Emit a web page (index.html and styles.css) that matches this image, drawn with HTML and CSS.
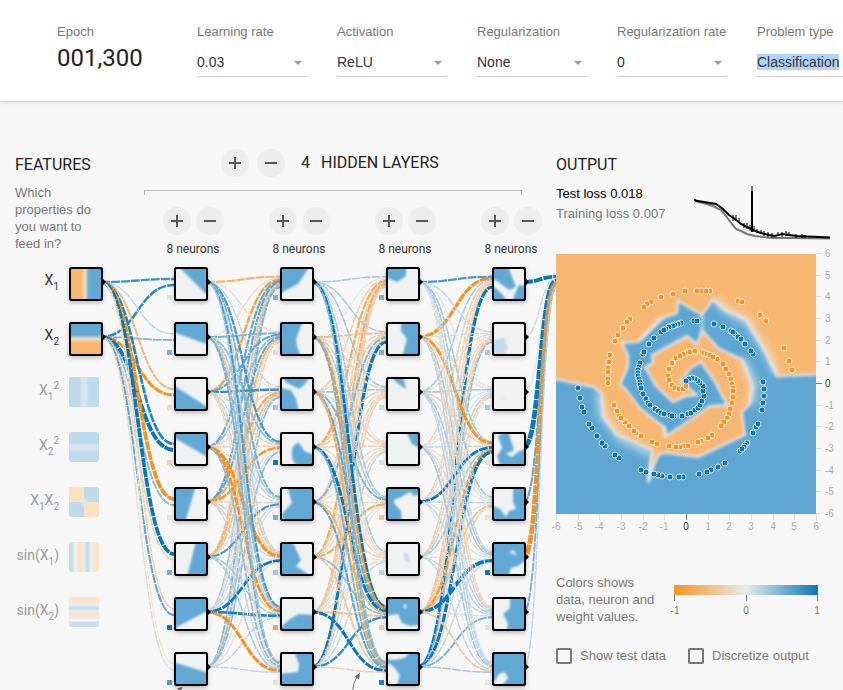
FILE: index.html
```html
<!DOCTYPE html>
<html lang="en">
<head>
<meta charset="utf-8">
<title>Neural network playground</title>
<link rel="stylesheet" href="styles.css">
</head>
<body>
<header class="controls">
  <div class="control">
    <span class="control-label">Epoch</span>
    <output class="epoch">001,300</output>
  </div>
  <div class="control">
    <label class="control-label" for="rate">Learning rate</label>
    <div class="picker"><select id="rate"><option>0.03</option></select></div>
  </div>
  <div class="control">
    <label class="control-label" for="activation">Activation</label>
    <div class="picker"><select id="activation"><option>ReLU</option></select></div>
  </div>
  <div class="control">
    <label class="control-label" for="regularization">Regularization</label>
    <div class="picker"><select id="regularization"><option>None</option></select></div>
  </div>
  <div class="control">
    <label class="control-label" for="regrate">Regularization rate</label>
    <div class="picker"><select id="regrate"><option>0</option></select></div>
  </div>
  <div class="control">
    <label class="control-label" for="problem">Problem type</label>
    <div class="picker"><select id="problem" class="selected"><option>Classification</option></select></div>
  </div>
</header>
<main class="workspace">
  <section class="network">
    <div class="network-head">
      <div class="features">
        <h2>FEATURES</h2>
        <p>Which properties do you want to feed in?</p>
      </div>
      <div class="layers">
        <div class="layer-count">
          <button class="round" aria-label="Add layer"><svg viewBox="0 0 28 28"><path d="M14 8v12M8 14h12"/></svg></button>
          <button class="round" aria-label="Remove layer"><svg viewBox="0 0 28 28"><path d="M8 14h12"/></svg></button>
          <h2><span class="count">4</span>HIDDEN LAYERS</h2>
        </div>
        <div class="bracket"></div>
        <div class="neuron-groups" id="groups"></div>
      </div>
    </div>
    <svg class="diagram" id="diagram" viewBox="0 260 556 430" role="img" aria-label="Network">
      <defs>
        <filter id="soft" x="-20%" y="-20%" width="140%" height="140%"><feGaussianBlur stdDeviation="1.300"/></filter>
        <filter id="shade" x="-30%" y="-30%" width="160%" height="160%"><feDropShadow dx="0" dy="2" stdDeviation="2" flood-opacity="0.25"/></filter>
        <clipPath id="thumb"><rect width="30" height="30"/></clipPath>
        <clipPath id="thumbRound"><rect width="30" height="30" rx="3"/></clipPath>
        <linearGradient id="gx1"><stop offset=".35" stop-color="#f8b870"/><stop offset=".47" stop-color="#f1ddc5"/><stop offset=".6" stop-color="#62a8d5"/></linearGradient>
        <linearGradient id="gx2" x2="0" y2="1"><stop offset=".35" stop-color="#62a8d5"/><stop offset=".5" stop-color="#f1ddc5"/><stop offset=".62" stop-color="#f8b870"/></linearGradient>
        <linearGradient id="gsq"><stop offset=".35" stop-color="#bfdaec"/><stop offset=".45" stop-color="#d7e6ee"/><stop offset=".55" stop-color="#d7e6ee"/><stop offset=".67" stop-color="#bfdaec"/></linearGradient>
        <linearGradient id="gsqy" x2="0" y2="1"><stop offset=".35" stop-color="#bfdaec"/><stop offset=".45" stop-color="#d7e6ee"/><stop offset=".55" stop-color="#d7e6ee"/><stop offset=".67" stop-color="#bfdaec"/></linearGradient>
        <linearGradient id="gsin"><stop offset=".1" stop-color="#c4dcec"/><stop offset=".22" stop-color="#f3efea"/><stop offset=".32" stop-color="#fae1c6"/><stop offset=".42" stop-color="#f8e3cd"/><stop offset=".5" stop-color="#e8eef0"/><stop offset=".62" stop-color="#bfdaec"/><stop offset=".75" stop-color="#edf0f2"/><stop offset=".83" stop-color="#fae3cb"/></linearGradient>
        <linearGradient id="gsiny" x2="0" y2="1"><stop offset=".15" stop-color="#fae3cb"/><stop offset=".25" stop-color="#edf0f2"/><stop offset=".37" stop-color="#bfdaec"/><stop offset=".48" stop-color="#e8eef0"/><stop offset=".6" stop-color="#fae1c6"/><stop offset=".7" stop-color="#f8e9dc"/><stop offset=".78" stop-color="#f3f5f6"/><stop offset=".85" stop-color="#c8deed"/></linearGradient>
      </defs>
      <g id="links" class="links"></g>
      <g id="nodes"></g>
      <g class="callouts">
        <path d="M353 692Q352 684 359 674"/><path class="tip" d="M360 672.500l-1 7-4-3z"/>
        <path d="M173 694L180 689"/><path class="tip" d="M183 687l-6 1 3 4z"/>
      </g>
    </svg>
  </section>
  <section class="output">
    <div class="output-head">
      <div>
        <h2>OUTPUT</h2>
        <div class="loss test">Test loss 0.018</div>
        <div class="loss">Training loss 0.007</div>
      </div>
      <svg class="loss-chart" viewBox="0 0 138 56" aria-hidden="true">
        <path class="train" d="M2 15L10 17 20 20 28 24 33 30 38 37 43 43 48 45 54 48 62 50 70 51 80 52 100 52 137 52.500"/>
        <path class="test" d="M2 15V13M2 14.500L14 16.500 23 18 30 23 36 29 42 33 48 38 54 41 60 44 68 47 76 49 82 50 89 48 96 49 104 50 137 51.500"/>
        <path class="test" d="M59 1V46"/>
        <path class="train" d="M59 0V5"/>
        <path class="test noise" d="M40 29v6M43 29v6M46 32v4M51 37v5M54 37v6M57 39v6M61 40v6M64 43v4M68 44v4M71 45v5M75 46v5M79 47v5M85 46v4M89 46v5M93 45v5M96 46v4M103 48v4M109 48v4M112 49v3"/>
      </svg>
    </div>
    <svg class="heatmap" id="heatmap" viewBox="0 0 287 282" role="img" aria-label="Output">
      <defs>
        <clipPath id="plot"><rect width="260" height="260"/></clipPath>
        <filter id="edge" x="-5%" y="-5%" width="110%" height="110%"><feGaussianBlur stdDeviation="1.500"/></filter>
        <filter id="wide" x="-30%" y="-30%" width="160%" height="160%"><feGaussianBlur stdDeviation="3.500"/></filter>
      </defs>
      <g clip-path="url(#plot)">
        <rect class="blue" width="260" height="260"/>
        <path class="region" filter="url(#edge)" d="M-20 -20H280V120L221 122 207 94 189 65 170 57 157 46 146 61 122 47 121 59 107 64 82 88 66 89 72 101 72 113 64 131 69 134 84 154 109 174 110 182 134 166 154 152 171 151 159 128 145 108 135 114 125 126 130 132 141 141 130 142 117 148 100 132 89 113 97 109 96 101 131 82 141 90 146 76 162 94 187 106 197 133 194 150 186 158 189 181 142 203 111 199 103 200 97 213 92 229 96 196 61 181 47 163 45 139 37 133 -20 121Z"/>
        <path class="haze" filter="url(#wide)" d="M159 45L170 56 192 68 210 96 222 121M43 138L46 160 64 184 96 200M187 106L198 130 195 150"/>
        <path class="haze thin" filter="url(#edge)" d="M146 60V76M106 62L84 86M96 203L93 226M108 172v11"/>
      </g>
      <g id="dots"></g>
      <g id="axes"></g>
    </svg>
    <div class="legend">
      <p>Colors shows data, neuron and weight values.</p>
      <div class="scale">
        <div class="ramp"></div>
        <div class="ticks"><i></i><i></i><i></i></div>
        <div class="marks"><span>-1</span><span>0</span><span>1</span></div>
      </div>
    </div>
    <div class="options">
      <label><input type="checkbox">Show test data</label>
      <label><input type="checkbox">Discretize output</label>
    </div>
  </section>
</main>
<script src="app.js"></script>
</body>
</html>
```
FILE: styles.css
```css
* { box-sizing: border-box; }
body {
  margin: 0;
  background: #f7f7f7;
  color: #777;
  font: 13px/17px "Liberation Sans", Arial, sans-serif;
  overflow: hidden;
}
h2 {
  margin: 0;
  color: #222;
  font: 400 16px/20px Roboto, sans-serif;
}
p { margin: 0; }

.controls {
  display: grid;
  grid-auto-flow: column;
  grid-auto-columns: 110px;
  justify-content: start;
  gap: 30px;
  padding: 23px 0 24px 57px;
  background: #fff;
  border-bottom: 1px solid #dcdcdc;
  box-shadow: 0 1px 4px rgba(0, 0, 0, .12);
}
.control { display: flex; flex-direction: column; white-space: nowrap; }
.control-label { font-size: 13px; line-height: 18px; }
.epoch { color: #222; font: 24px/34px Roboto, sans-serif; }
.picker {
  position: relative;
  margin-top: 7px;
  border-bottom: 1px solid #ccc;
}
.picker::after {
  content: "";
  position: absolute;
  right: 5px;
  top: 13px;
  border: 4px solid transparent;
  border-top-color: #999;
  border-bottom: 0;
}
select {
  appearance: none;
  display: block;
  width: 100%;
  height: 28px;
  padding: 0;
  border: 0;
  background: none;
  color: #333;
  font: 14px/16px "Liberation Sans", Arial, sans-serif;
}
select.selected { background: linear-gradient(#b1d3fa, #b1d3fa) 0 6px / 82px 16px no-repeat; }

.workspace {
  display: grid;
  grid-template-columns: 556px 1fr;
  align-items: start;
}
.network-head {
  display: grid;
  grid-template-columns: 140px 1fr;
  height: 158px;
}
.features { padding: 53px 45px 0 15px; }
.features p { margin-top: 9px; white-space: normal; }
.layers { padding-top: 47px; }
.layer-count { display: flex; align-items: center; gap: 8px; padding-left: 81px; }
.layer-count h2 { padding-left: 8px; }
.count { margin-right: 11px; }
.round {
  width: 28px;
  height: 28px;
  padding: 0;
  border: 0;
  border-radius: 50%;
  background: #ededed;
}
.round svg { display: block; }
.round path { stroke: #555; stroke-width: 2; }
.bracket {
  width: 378px;
  height: 5px;
  margin: 13px 0 12px 4px;
  border: 1px solid #bbb;
  border-bottom: 0;
}
.neuron-groups { display: grid; grid-template-columns: repeat(4, 106px); }
.group { text-align: center; color: #333; font: 12px/16px Roboto, sans-serif; }
.group-buttons { display: flex; justify-content: center; gap: 5px; margin-bottom: 6px; }
.diagram { display: block; width: 556px; height: 430px; }
.links { fill: none; stroke-dasharray: 9 1; }
.node-frame { fill: none; stroke: #000; stroke-width: 2; }
.feature-name { fill: #333; font: 14px Roboto, sans-serif; text-anchor: end; }
.feature-name .small { font-size: 10px; }
.feature-name.inactive { fill: #999; }
.callouts path { fill: none; stroke: #777; }
.callouts .tip { fill: #666; stroke: none; }

.output-head { display: flex; padding-top: 53px; }
.output-head > div { flex: 0 0 137px; }
.loss { line-height: 20px; }
.loss.test { margin-top: 9px; color: #000; }
.loss-chart { width: 138px; height: 56px; margin-top: 31px; }
.loss-chart path { fill: none; stroke-width: 2; }
.loss-chart .train { stroke: #777; }
.loss-chart .test { stroke: #000; }
.loss-chart .noise { stroke-width: 1; }
.heatmap { display: block; width: 287px; height: 282px; margin-top: 12px; overflow: visible; }
.blue { fill: #5fa6d3; }
.region { fill: #f6b772; stroke: #e8eaeb; stroke-width: 2; }
.haze { fill: none; stroke: #e8eaeb; stroke-width: 8; opacity: .6; }
.haze.thin { stroke-width: 4; opacity: .5; }
.dot-orange, .dot-blue { stroke: #fff; stroke-opacity: .8; }
.dot-orange { fill: #f59322; }
.dot-blue { fill: #0877bd; }
.tick { stroke: #ddd; }
.tick.zero { stroke: #777; }
.tick-label { fill: #aaa; font-size: 10px; }
.tick-label.zero { fill: #333; }

.legend { display: flex; gap: 8px; margin-top: 38px; }
.legend p { width: 110px; }
.scale { width: 144px; padding-top: 11px; }
.ramp { height: 10px; background: linear-gradient(to right, #f59322, #e8eaeb, #0877bd); }
.ticks { display: flex; justify-content: space-between; }
.ticks i { width: 1px; height: 6px; background: #777; }
.marks { display: flex; justify-content: space-between; margin: 4px -5px; font-size: 10px; line-height: 12px; }
.marks span { width: 12px; text-align: center; }
.options { display: flex; gap: 22px; margin-top: 22px; white-space: nowrap; }
.options label { display: flex; align-items: center; gap: 8px; }
input[type="checkbox"] {
  appearance: none;
  width: 16px;
  height: 16px;
  margin: 0;
  border: 2px solid #777;
  border-radius: 2px;
}
```
FILE: app.js
```js
const NS = "http://www.w3.org/2000/svg";
function add(parent, tag, attrs, text) {
  const el = document.createElementNS(NS, tag);
  for (const k in attrs) el.setAttribute(k, attrs[k]);
  if (text !== undefined) el.textContent = text;
  parent.appendChild(el);
  return el;
}

const groups = document.getElementById("groups");
for (let i = 0; i < 4; i++) {
  groups.insertAdjacentHTML("beforeend",
    '<div class="group"><div class="group-buttons">' +
    '<button class="round" aria-label="Add neuron"><svg viewBox="0 0 28 28"><path d="M14 8v12M8 14h12"/></svg></button>' +
    '<button class="round" aria-label="Remove neuron"><svg viewBox="0 0 28 28"><path d="M8 14h12"/></svg></button>' +
    '</div>8 neurons</div>');
}

// Weight matrices, indexed [source][target].
const weights = [
  [[.75, .2, -.55, .9, -1.5, 1.5, -.3, -.05],
   [.85, .45, -1.1, 1.6, .45, -.35, .6, -.2]],
  [[-.6, -.2, .2, .7, .5, .2, .7, .3],
   [-.2, .5, -.1, .4, .3, -.4, .4, .5],
   [-.8, .6, .8, -.3, .2, -.3, .2, -.2],
   [.6, .4, -.3, -.3, -.2, -1.3, -1, .4],
   [.6, .6, -.7, -.9, -.3, .2, -.3, .2],
   [-.5, -.6, -.5, .1, .7, .1, .3, .3],
   [.3, -.2, .2, .1, .2, 1, .9, -1.1],
   [.5, -.3, .4, .4, .1, -.2, .2, .2]],
  [[.3, .3, .3, -.1, .3, .3, 1.1, .4],
   [-.05, -.5, -.3, -.3, .3, -.2, -.9, .5],
   [-.3, -.3, .3, -.2, .5, -.2, .6, -.7],
   [-.7, -.4, -.3, -.3, -.2, -.2, 1.1, .5],
   [-.3, .5, -.2, -.2, -.2, -.3, -.6, .6],
   [-.7, -.3, -.3, -.2, -.7, -.1, .4, -.4],
   [-.4, -.4, -.3, -.2, .1, -.2, -.5, 1.1],
   [-.3, 1.2, -.3, .2, -.2, .2, .8, -.3]],
  [[.7, .2, -.1, .3, .3, .2, -.2, .1],
   [-1.2, .1, -.2, -1.1, -.2, .3, -.3, .2],
   [.3, -.2, .3, -.3, .1, .3, .2, .2],
   [-.3, -.1, .1, .2, -.1, -.2, .2, .3],
   [-.3, -.2, .1, 1, .2, .1, .2, -.1],
   [-.3, -.3, .2, .3, -.1, .1, .2, .2],
   [-.4, -.4, -.3, -.9, -.5, 1.5, -.2, -.4],
   [1.2, .4, -.2, 1.2, -.3, .2, .5, .3]],
  [[1.6], [.15], [-.1], [2.1], [.6], [-2.1], [.5], [.2]]
];
const columns = [84, 189, 295, 401, 507, 571];
const rowY = i => 282 + 55 * i;

function color(w) {
  const t = Math.min(1, Math.abs(w));
  const zero = [232, 234, 235], end = w < 0 ? [245, 147, 34] : [8, 119, 189];
  return "rgb(" + zero.map((z, i) => Math.round(z + (end[i] - z) * t)).join(",") + ")";
}

const links = document.getElementById("links");
weights.forEach((matrix, layer) => {
  const x1 = columns[layer] + 17, x2 = columns[layer + 1] - 15, mid = (x1 + x2) / 2;
  for (let t = 0; t < matrix[0].length; t++) {
    matrix.forEach((row, s) => {
      const y1 = rowY(s), y2 = rowY(t) + (s - (matrix.length - 1) / 2) / matrix.length * 12;
      add(links, "path", {
        d: `M${x1} ${y1}C${mid} ${y1} ${mid} ${y2} ${x2} ${y2}`,
        stroke: color(row[t]),
        "stroke-width": 1 + Math.abs(row[t]) * 1.8,
        "stroke-dashoffset": (s * 3 + t * 5) % 10
      });
    });
  }
});

// Neuron thumbnails: "b" paints blue on light, "l" light on blue, "f" a faint patch.
const thumbs = [
  [["b", "2,-3 33,-3 33,28"], ["b", "-3,-3 33,-3 33,21 -3,8"], ["b", "-3,6 33,29 33,33 -3,33"], ["b", "-3,-3 33,-3 33,24 -3,3"],
   ["b", "-3,-3 20,-3 9,33 -3,33"], ["b", "20,-3 33,-3 33,33 11,33"], ["b", "-3,-3 33,-3 33,11 -3,30"], ["b", "-3,8 33,19 33,33 -3,33"]],
  [["b", "-3,-3 28,-3 16,15 8,19 -3,25"], ["b", "-3,-3 21,-3 14,15 15,22 19,33 -3,33"],
   ["b", "2,-3 29,-3 22,6 17,10 3,3", "-3,9 9,11 14,20 17,33 -3,33"], ["b", "10,14 16,8 20,13 22,17 33,21 33,33 15,33 10,24"],
   ["b", "5,-3 33,-3 33,33 3,33 -1,26 10,14"], ["b", "-3,-3 10,-3 19,16 14,22 20,26 29,33 -3,33"],
   ["b", "-3,33 -3,30 8,20 17,15 33,16 33,33"], ["b", "12,-3 33,-3 33,33 -3,33 -3,20 16,18 17,10"]],
  [["b", "-3,-3 18,-3 18,7 9,13 -3,8"], ["b", "13,-3 33,-3 33,33 14,33 19,15 13,7"], ["b", "3,-3 15,-3 18,10 9,4"], ["b", "18,-3 33,-3 33,15 24,10"],
   ["l", "6,11 13,8 22,3 26,7 33,5 33,33 14,33 13,22 6,14"], ["f", "15,9 20,9 22,18 17,18"],
   ["l", "-3,17 10,15 14,24 22,27 33,26 33,33 -3,33", "15,7 17,5 19,7 17,10"], ["l", "-3,-3 22,-3 17,4 6,6 -3,5", "-3,8 5,12 12,21 8,33 -3,33"]],
  [["b", "3,-3 14,-3 18,8 22,18 15,21 3,12 -3,9 -3,3", "-3,15 8,25 14,33 -3,33", "25,16 33,17 33,33 18,33 21,25"],
   ["f", "-3,16 11,14 14,24 9,33 -3,33"], ["f", "6,15 11,18 12,23 7,20"],
   ["b", "4,2 14,-3 20,16 12,20 18,23 24,18 33,14 33,33 7,33 3,22 8,14"], ["l", "-3,-3 19,-3 19,13 22,20 15,22 12,28 6,20 -3,16"],
   ["l", "14,33 17,24 24,22 33,15 33,33", "15,10 18,6 21,8 22,12 18,9"], ["b", "16,-3 33,-3 33,33 12,33 14,24 9,15 16,9"],
   ["l", "5,20 11,18 14,24 11,28 5,33 -3,33"]]
];
const biases = [
  [.05, .5, -.2, -.3, -.1, .5, 1, .7],
  [.5, -.2, .3, 1, .5, .3, -.8, -.1],
  [.5, .5, .15, .1, -.4, .2, -.4, .9],
  [-.02, .3, .3, -.1, -.1, 1, .05, -.05]
];
const BLUE = "#62a8d5", LIGHT = "#f0f2f2";
const nodes = document.getElementById("nodes");

function frame(g) {
  add(g, "rect", { class: "node-frame", x: 1, y: 1, width: 32, height: 32, rx: 2 });
  add(g, "path", { d: "M33 11l4 4-4 4z" });
}
thumbs.forEach((column, c) => column.forEach(([kind, ...shapes], r) => {
  const x = columns[c + 1] - 15, y = rowY(r) - 15;
  const g = add(nodes, "g", { transform: `translate(${x} ${y})` });
  add(g, "rect", { width: 34, height: 34, rx: 3, filter: "url(#shade)" });
  const clip = add(add(g, "g", { transform: "translate(2 2)" }), "g", { "clip-path": "url(#thumb)" });
  add(clip, "rect", { width: 30, height: 30, fill: kind === "l" ? BLUE : LIGHT });
  shapes.forEach(points => add(clip, "polygon", {
    points, filter: "url(#soft)",
    fill: kind === "l" ? LIGHT : kind === "b" ? BLUE : r === 2 ? "#e3eaf0" : "#c6dbea"
  }));
  frame(g);
  add(nodes, "rect", { x: x - 7, y: y + 28, width: 5, height: 5, fill: color(biases[c][r]) });
}));

// Input features; each name is a list of [text, baseline shift].
const features = [
  ["url(#gx1)", [["X", 0], ["1", 1]]],
  ["url(#gx2)", [["X", 0], ["2", 1]]],
  ["url(#gsq)", [["X", 0], ["1", 1], ["2", -1]]],
  ["url(#gsqy)", [["X", 0], ["2", 1], ["2", -1]]],
  ["#bfdaec", [["X", 0], ["1", 1], ["X", 0], ["2", 1]]],
  ["url(#gsin)", [["sin(X", 0], ["1", 1], [")", 0]]],
  ["url(#gsiny)", [["sin(X", 0], ["2", 1], [")", 0]]]
];
features.forEach(([fill, name], i) => {
  const active = i < 2;
  const g = add(nodes, "g", { transform: `translate(69 ${rowY(i) - 15})` });
  if (active) {
    add(g, "rect", { width: 34, height: 34, rx: 3, filter: "url(#shade)" });
    add(g, "rect", { x: 2, y: 2, width: 30, height: 30, fill });
    frame(g);
  } else {
    add(g, "rect", { width: 30, height: 30, rx: 3, fill });
    if (i === 4) {
      const q = add(g, "g", { "clip-path": "url(#thumbRound)" });
      add(q, "path", { d: "M-3-3H15V15H-3zM15 15H33V33H15z", fill: "#fbe0c2" });
      add(q, "circle", { cx: 15, cy: 15, r: 3, fill: "#e6ebee", filter: "url(#soft)" });
    }
  }
  const label = add(nodes, "text", { x: 59, y: rowY(i) + 3, class: "feature-name" + (active ? "" : " inactive") });
  let level = 0;
  name.forEach(([text, shift]) => {
    const target = shift > 0 ? 5 : shift < 0 ? -6 : 0;
    add(label, "tspan", { dy: target - level, class: shift ? "small" : "" }, text);
    level = target;
  });
});

// Data points of the two spirals.
const orange = "154,37 150,37 145,37 141,37 129,37 117,40 105,43 95,48 91,50 88,53 74,65 71,68 67,74 62,81 59,87 54,101 53,108 52,114 52,118 52,125 52,129 182,47 186,48 204,61 210,67 228,94 233,107 236,116 113,115 116,109 120,104 128,100 124,102 132,98 134,98 139,97 146,98 148,99 151,100 154,101 161,105 157,103 167,110 170,115 173,120 175,125 176,130 177,134 177,137 177,143 112,122 113,126 116,131 119,134 123,135 127,135 130,132 176,149 174,155 173,160 171,164 168,168 165,172 156,181 152,184 145,187 142,188 132,192 127,192 124,193 120,193 113,192 101,190 96,188 85,182 80,179 78,177 73,172 69,168 66,165 63,162 65,164 61,157 58,151";
const blue = "158,70 167,73 175,77 179,80 182,83 177,78 185,85 189,90 197,100 195,97 207,128 208,135 208,142 207,149 206,156 200,173 202,170 197,179 191,189 189,191 188,193 184,197 186,195 169,209 162,213 155,216 151,218 143,220 127,223 123,223 114,223 106,222 102,221 98,220 90,218 85,216 63,204 59,201 49,192 46,189 41,182 36,174 33,170 28,158 26,153 24,144 22,134 138,67 141,67 125,69 122,70 119,71 115,72 117,72 113,73 110,75 105,78 108,76 98,84 93,90 87,100 88,98 84,109 83,113 82,116 82,119 82,122 83,125 84,128 84,131 85,134 87,140 90,145 92,149 94,151 99,155 102,157 105,159 108,160 114,161 118,162 116,162 126,162 132,160 135,159 139,156 142,154 144,151 146,147 148,142 147,137 147,132 144,129 142,127 139,125 136,124 133,125 130,127";
const dots = document.getElementById("dots");
[[orange, "dot-orange"], [blue, "dot-blue"]].forEach(([list, cls]) =>
  list.split(" ").forEach(p => {
    const [cx, cy] = p.split(",");
    add(dots, "circle", { cx, cy, r: 3, class: cls });
  }));

const axes = document.getElementById("axes");
for (let v = -6; v <= 6; v++) {
  const p = Math.round((v + 6) * 260 / 12), q = 260 - p, zero = v === 0 ? " zero" : "";
  add(axes, "path", { d: `M${p + .5} 260v6`, class: "tick" + zero });
  add(axes, "path", { d: `M260 ${q - .5}h6`, class: "tick" + zero });
  add(axes, "text", { x: p, y: 276, "text-anchor": "middle", class: "tick-label" + zero }, v);
  add(axes, "text", { x: 269, y: q + 3, class: "tick-label" + zero }, v);
}
```
